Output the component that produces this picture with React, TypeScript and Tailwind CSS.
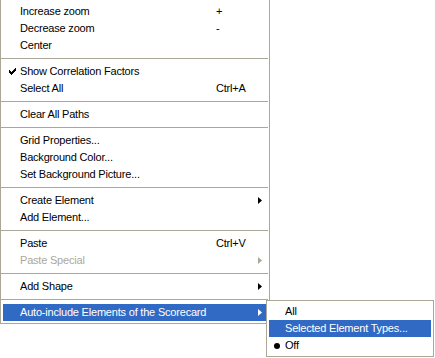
import React from "react"

type Item =
  | { sep: true }
  | {
      sep?: false
      label: string
      shortcut?: string
      checked?: boolean
      sub?: boolean
      disabled?: boolean
      active?: boolean
    }

const items: Item[] = [
  { label: "Increase zoom", shortcut: "+" },
  { label: "Decrease zoom", shortcut: "-" },
  { label: "Center" },
  { sep: true },
  { label: "Show Correlation Factors", checked: true },
  { label: "Select All", shortcut: "Ctrl+A" },
  { sep: true },
  { label: "Clear All Paths" },
  { sep: true },
  { label: "Grid Properties..." },
  { label: "Background Color..." },
  { label: "Set Background Picture..." },
  { sep: true },
  { label: "Create Element", sub: true },
  { label: "Add Element..." },
  { sep: true },
  { label: "Paste", shortcut: "Ctrl+V" },
  { label: "Paste Special", sub: true, disabled: true },
  { sep: true },
  { label: "Add Shape", sub: true },
  { sep: true },
  { label: "Auto-include Elements of the Scorecard", sub: true, active: true },
]

const Check = () => (
  <svg width="7" height="7" viewBox="0 0 7 7" className="block">
    <path d="M0 2h1v1h1v1h1V3h1V2h1V1h1V0h1v3H6v1H5v1H4v1H3v1H2V6H1V5H0z" fill="#000" />
  </svg>
)

const Arrow = ({ color }: { color: string }) => (
  <svg width="4" height="7" viewBox="0 0 4 7" className="block">
    <path d="M0 0L4 3.5L0 7z" fill={color} />
  </svg>
)

export default function App() {
  return (
    <div
      className="relative w-[435px] h-[358px] bg-white text-[11px] tracking-[-0.2px] text-black overflow-hidden"
      style={{ fontFamily: '"Liberation Sans", Arial, sans-serif' }}
    >
      <div className="w-[270px] border border-t-0 border-[#aca899] bg-white p-[2px] pt-[3px] pr-[3px]">
        {items.map((it, i) =>
          it.sep ? (
            <div key={i} className="h-[9px] flex items-center -mx-[2px]">
              <div className="h-px w-full bg-[#aca899]" />
            </div>
          ) : (
            <div
              key={i}
              className={`h-[17px] flex items-center ${
                it.active ? "bg-[#316ac5] text-white" : it.disabled ? "text-[#aca899]" : ""
              }`}
            >
              <div className="w-[17px] flex justify-center pl-[1px]">{it.checked && <Check />}</div>
              <div className="w-[196px] whitespace-nowrap">{it.label}</div>
              <div className="w-[38px] whitespace-nowrap">{it.shortcut}</div>
              <div className="pl-[4px]">
                {it.sub && <Arrow color={it.active ? "#fff" : it.disabled ? "#aca899" : "#000"} />}
              </div>
            </div>
          )
        )}
      </div>

      <div className="absolute left-[266px] top-[300px] w-[168px] border border-[#aca899] bg-white p-[2px]">
        <div className="h-[17px] flex items-center">
          <div className="w-[16px]" />
          <span>All</span>
        </div>
        <div className="h-[17px] flex items-center bg-[#316ac5] text-white">
          <div className="w-[16px]" />
          <span>Selected Element Types...</span>
        </div>
        <div className="h-[17px] flex items-center">
          <div className="w-[16px] flex justify-center">
            <div className="w-[6px] h-[6px] rounded-full bg-black" />
          </div>
          <span>Off</span>
        </div>
      </div>
    </div>
  )
}
